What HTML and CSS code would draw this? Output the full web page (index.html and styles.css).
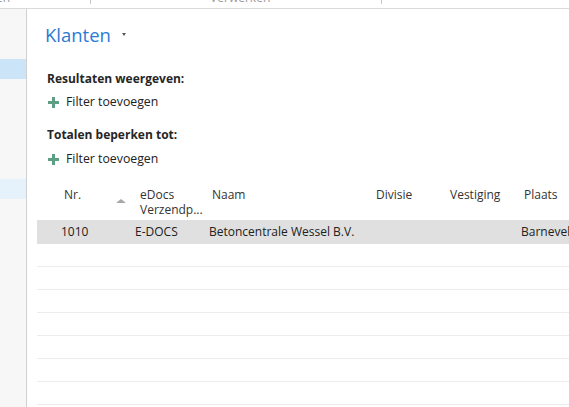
FILE: index.html
```html
<!DOCTYPE html>
<html lang="nl">
<head>
<meta charset="utf-8">
<title>Klanten</title>
<link rel="stylesheet" href="styles.css">
</head>
<body>
<div class="topbar">
  <span class="tb-item tb-first">en</span>
  <span class="tb-sep"></span>
  <span class="tb-item tb-verwerken">Verwerken</span>
  <span class="tb-sep tb-sep2"></span>
</div>
<div class="page">
  <aside class="sidebar">
    <div class="side-item side-selected"></div>
    <div class="side-item"></div>
    <div class="side-item"></div>
    <div class="side-item"></div>
    <div class="side-item"></div>
    <div class="side-item"></div>
    <div class="side-item side-hover"></div>
  </aside>
  <main class="main">
    <div class="title-row">
      <h1 class="title">Klanten</h1>
      <span class="title-caret"></span>
    </div>
    <section class="filters">
      <h2 class="section-title first">Resultaten weergeven:</h2>
      <div class="add-filter"><span class="plus"></span><span>Filter toevoegen</span></div>
      <h2 class="section-title second">Totalen beperken tot:</h2>
      <div class="add-filter"><span class="plus"></span><span>Filter toevoegen</span></div>
    </section>
    <div class="grid">
      <div class="row head">
        <div class="cell">Nr.</div>
        <div class="cell cell-sort"><span class="sort-arrow"></span><span class="two-line"><span class="hl">eDocs</span><span class="hl">Verzendp...</span></span></div>
        <div class="cell">Naam</div>
        <div class="cell">Divisie</div>
        <div class="cell">Vestiging</div>
        <div class="cell">Plaats</div>
      </div>
      <div class="row data selected">
        <div class="cell">1010</div>
        <div class="cell">E-DOCS</div>
        <div class="cell">Betoncentrale Wessel B.V.</div>
        <div class="cell"></div>
        <div class="cell"></div>
        <div class="cell">Barneveld</div>
      </div>
      <div class="row data empty"></div>
      <div class="row data empty"></div>
      <div class="row data empty"></div>
      <div class="row data empty"></div>
      <div class="row data empty"></div>
      <div class="row data empty"></div>
      <div class="row data empty"></div>
    </div>
  </main>
</div>
</body>
</html>
```

FILE: styles.css
```css
html, body {
  margin: 0;
  padding: 0;
  height: 100%;
  overflow: hidden;
  background: #ffffff;
}
body {
  font-family: "Open Sans", "Noto Sans", "DejaVu Sans", sans-serif;
  font-size: 12px;
  color: #212121;
}

.topbar {
  height: 8px;
  border-bottom: 1px solid #d9d9d9;
  overflow: hidden;
  display: flex;
  align-items: flex-start;
  color: #9a9a9a;
}
.tb-item {
  line-height: 16px;
  margin-top: -10px;
  white-space: nowrap;
}
.tb-first {
  margin-left: -4px;
}
.tb-sep {
  width: 1px;
  height: 4px;
  background: #c8c8c8;
  margin-left: 80px;
}
.tb-verwerken {
  margin-left: 119px;
}
.tb-sep2 {
  margin-left: 111px;
}

.page {
  display: flex;
  height: calc(100% - 9px);
}

.sidebar {
  width: 26px;
  flex: none;
  background: #f7f7f7;
  border-right: 1px solid #d0d0d0;
  display: flex;
  flex-direction: column;
  padding-top: 50px;
  box-sizing: content-box;
}
.side-item {
  height: 20px;
}
.side-selected {
  background: #cce4f7;
}
.side-hover {
  background: #e5f1fb;
}

.main {
  flex: 1;
  min-width: 0;
  overflow: hidden;
  padding-left: 10px;
}

.title-row {
  display: flex;
  align-items: center;
  padding-top: 14px;
  padding-left: 8px;
}
.title {
  margin: 0;
  font-weight: normal;
  font-size: 18.5px;
  line-height: 24px;
  color: #2a7ad4;
}
.title-caret {
  width: 0;
  height: 0;
  border-left: 2.5px solid transparent;
  border-right: 2.5px solid transparent;
  border-top: 3px solid #555;
  margin-left: 11px;
  margin-top: -1px;
}

.filters {
  padding-left: 10px;
}
.section-title {
  margin: 0;
  font-size: 12px;
  font-weight: bold;
  line-height: 16px;
  color: #262626;
}
.section-title.first {
  margin-top: 24px;
}
.section-title.second {
  margin-top: 17px;
}
.add-filter {
  display: flex;
  align-items: center;
  line-height: 16px;
  margin-top: 7px;
  color: #212121;
  font-size: 12.3px;
}
.section-title.second + .add-filter {
  margin-top: 8px;
}
.plus {
  position: relative;
  width: 11px;
  height: 11px;
  margin-left: 1px;
  margin-right: 7px;
}
.plus::before,
.plus::after {
  content: "";
  position: absolute;
  background: #5d9e84;
}
.plus::before {
  left: 0;
  top: 4px;
  width: 11px;
  height: 3px;
}
.plus::after {
  left: 4px;
  top: 0;
  width: 3px;
  height: 11px;
}

.grid {
  margin-top: 0;
  width: 560px;
}
.row {
  display: grid;
  grid-template-columns: 74px 74px 164px 74px 74px 100px;
}
.row.head {
  height: 53px;
  box-sizing: border-box;
  padding-top: 20px;
  color: #333;
}
.row.head .cell {
  padding-left: 27px;
  white-space: nowrap;
  line-height: 15px;
}
.row.head .cell-sort {
  padding-left: 5px;
  display: flex;
  align-items: flex-start;
}
.sort-arrow {
  width: 0;
  height: 0;
  border-left: 5px solid transparent;
  border-right: 5px solid transparent;
  border-bottom: 4px solid #a8a8a8;
  margin-top: 12px;
  margin-right: 14px;
  flex: none;
}
.two-line {
  display: flex;
  flex-direction: column;
}
.hl {
  display: block;
  line-height: 15px;
}
.row.data {
  height: 22px;
  border-bottom: 1px solid #ececec;
  line-height: 22px;
}
.row.data.selected {
  height: 24px;
  border-bottom: 0;
  background: #e0e0e0;
  line-height: 24px;
}
.row.data .cell {
  padding-left: 24px;
  white-space: nowrap;
}
```
